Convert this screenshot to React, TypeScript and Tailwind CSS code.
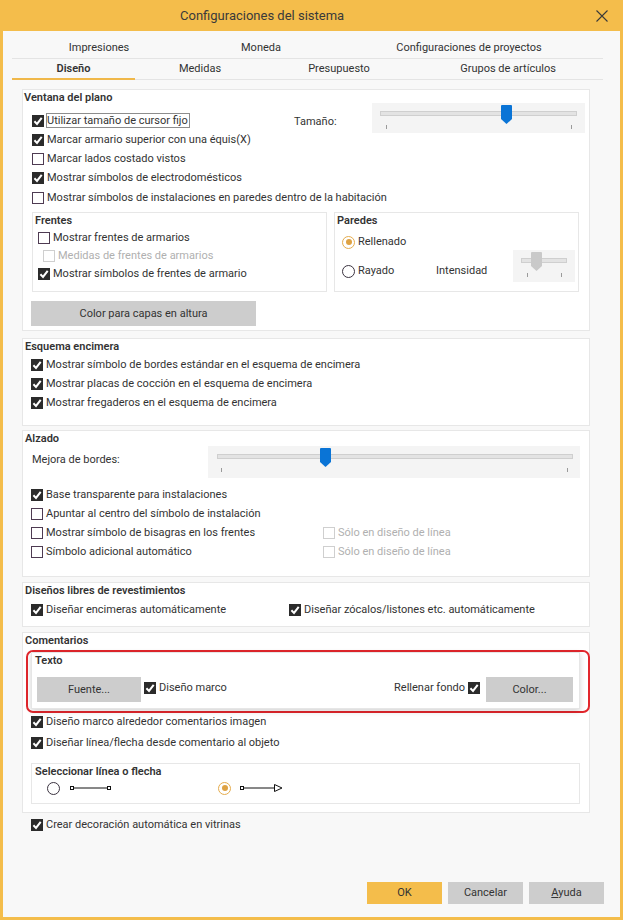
import React from "react";

function Check({ checked = false, disabled = false }: { checked?: boolean; disabled?: boolean }) {
  if (checked) {
    return (
      <span className="w-[12px] h-[12px] bg-[#2b2b2b] flex items-center justify-center shrink-0">
        <svg width="10" height="10" viewBox="0 0 10 10">
          <path d="M1.4 5.3 L4 7.9 L8.7 1.8" fill="none" stroke="#fff" strokeWidth="2" />
        </svg>
      </span>
    );
  }
  return (
    <span
      className={`block w-[12px] h-[12px] bg-white border shrink-0 ${
        disabled ? "border-[#cfcfcf]" : "border-[#4e3b52]"
      }`}
    />
  );
}

function CheckRow({
  label,
  checked = false,
  disabled = false,
  focus = false,
  h = "h-[19px]",
}: {
  label: string;
  checked?: boolean;
  disabled?: boolean;
  focus?: boolean;
  h?: string;
}) {
  return (
    <div className={`flex items-center ${h}`}>
      <Check checked={checked} disabled={disabled} />
      {focus ? (
        <span className="ml-[2px] border border-[#8d8d8d] leading-[13px] pr-px">{label}</span>
      ) : (
        <span className={`ml-[3px] ${disabled ? "text-[#b0b0b0]" : ""}`}>{label}</span>
      )}
    </div>
  );
}

function Radio({ checked = false }: { checked?: boolean }) {
  if (checked) {
    return (
      <span className="w-[13px] h-[13px] rounded-full border-[1.5px] border-[#e5ac4d] bg-white flex items-center justify-center shrink-0">
        <span className="block w-[6px] h-[6px] rounded-full bg-[#dea243]" />
      </span>
    );
  }
  return <span className="block w-[13px] h-[13px] rounded-full border border-[#3b3340] bg-white shrink-0" />;
}

function Slider({
  w,
  h,
  trackL,
  trackR,
  thumb,
  ticks,
  tickTop,
  disabled = false,
}: {
  w: number;
  h: number;
  trackL: number;
  trackR: number;
  thumb: number;
  ticks: number[];
  tickTop: number;
  disabled?: boolean;
}) {
  const t = thumb;
  return (
    <svg width={w} height={h} className="shrink-0 block">
      <rect x="0" y="0" width={w} height={h} fill="#f4f4f4" />
      <rect x={trackL + 0.5} y="8.5" width={w - trackL - trackR - 1} height="4" fill="#e3e3e3" stroke="#cfcfcf" />
      {ticks.map((x) => (
        <line key={x} x1={x + 0.5} x2={x + 0.5} y1={tickTop} y2={tickTop + 4} stroke="#9a9a9a" />
      ))}
      <path
        d={`M${t + 1} 2 H${t + 10} Q${t + 11} 2 ${t + 11} 3 V16 L${t + 5.5} 21 L${t} 16 V3 Q${t} 2 ${t + 1} 2 Z`}
        fill={disabled ? "#c9c9c9" : "#0a74d6"}
      />
    </svg>
  );
}

function Btn({ label, w, h = "h-[25px]", bg = "bg-[#cdcdcd]" }: { label: React.ReactNode; w: string; h?: string; bg?: string }) {
  return <div className={`${w} ${h} ${bg} flex items-center justify-center shrink-0`}>{label}</div>;
}

const section = "bg-white border border-[#e7e7e7] flex flex-col";
const title = "h-[16px] leading-[16px] font-semibold";

export default function App() {
  return (
    <div className="w-[623px] h-[920px] bg-[#f4bd4b] flex flex-col font-['Roboto',sans-serif] text-[11px] leading-[16px] text-[#333]">
      {/* title bar */}
      <div className="h-[31px] flex items-center shrink-0">
        <span className="ml-[180px] text-[13px] text-[#3a3a3a]">Configuraciones del sistema</span>
        <svg width="12" height="12" viewBox="0 0 12 12" className="ml-auto mr-[15px]">
          <path d="M0.5 0.5 L11.5 11.5 M11.5 0.5 L0.5 11.5" stroke="#3a3a3a" strokeWidth="1.1" />
        </svg>
      </div>

      <div className="mx-[3px] mb-[3px] flex-1 bg-[#f8f8f8] flex flex-col">
        {/* tabs */}
        <div className="ml-[9px] mt-[7px] w-[591px]">
          <div className="flex h-[21px] border-b border-[#e4e4e4]">
            <div className="w-[174px] flex items-center justify-center">Impresiones</div>
            <div className="w-[150px] flex items-center justify-center">Moneda</div>
            <div className="w-[266px] flex items-center justify-center">Configuraciones de proyectos</div>
          </div>
          <div className="flex h-[21px] border-b border-[#e4e4e4]">
            <div className="w-[123px] flex items-center justify-center font-semibold border-b-2 border-[#f0b84a] -mb-px">
              Diseño
            </div>
            <div className="w-[130px] flex items-center justify-center">Medidas</div>
            <div className="w-[148px] flex items-center justify-center">Presupuesto</div>
            <div className="w-[190px] flex items-center justify-center">Grupos de artículos</div>
          </div>
        </div>

        <div className="ml-[19px] w-[568px] mt-[9px] flex flex-col">
          {/* Ventana del plano */}
          <div className={`${section} h-[242px]`}>
            <div className="flex">
              <div className="flex flex-col">
                <div className={`${title} pl-[1px]`}>Ventana del plano</div>
                <div className="pl-[9px] mt-[5px]">
                  <CheckRow label="Utilizar tamaño de cursor fijo" checked focus />
                  <CheckRow label="Marcar armario superior con una équis(X)" checked />
                  <CheckRow label="Marcar lados costado vistos" />
                  <CheckRow label="Mostrar símbolos de electrodomésticos" checked />
                </div>
              </div>
              <div className="ml-auto mr-[4px] pt-[13px] flex items-start">
                <span className="w-[78px] mt-[11px]">Tamaño:</span>
                <Slider w={213} h={30} trackL={8} trackR={8} thumb={129} ticks={[14, 199]} tickTop={22} />
              </div>
            </div>
            <div className="pl-[9px] mt-[1px]">
              <CheckRow label="Mostrar símbolos de instalaciones en paredes dentro de la habitación" />
            </div>
            <div className="flex ml-[9px] mt-[5px] gap-[7px]">
              <div className="w-[295px] h-[80px] border border-[#e7e7e7] flex flex-col">
                <div className={`${title} pl-[2px]`}>Frentes</div>
                <div className="pl-[5px]">
                  <CheckRow label="Mostrar frentes de armarios" h="h-[18px]" />
                  <div className="pl-[5px]">
                    <CheckRow label="Medidas de frentes de armarios" disabled h="h-[18px]" />
                  </div>
                  <CheckRow label="Mostrar símbolos de frentes de armario" checked h="h-[18px]" />
                </div>
              </div>
              <div className="w-[245px] h-[80px] border border-[#e7e7e7] flex flex-col">
                <div className={`${title} pl-[2px]`}>Paredes</div>
                <div className="flex items-center h-[20px] mt-[3px] pl-[7px]">
                  <Radio checked />
                  <span className="ml-[3px]">Rellenado</span>
                </div>
                <div className="flex items-start pl-[7px] -mt-[2px]">
                  <div className="w-[94px] flex items-center mt-[13px]">
                    <Radio />
                    <span className="ml-[3px]">Rayado</span>
                  </div>
                  <span className="w-[77px] mt-[13px]">Intensidad</span>
                  <Slider w={62} h={32} trackL={8} trackR={8} thumb={18} ticks={[14, 48]} tickTop={23} disabled />
                </div>
              </div>
            </div>
            <div className="ml-[8px] mt-[9px]">
              <Btn label="Color para capas en altura" w="w-[225px]" />
            </div>
          </div>

          {/* Esquema encimera */}
          <div className={`${section} h-[88px] mt-[7px]`}>
            <div className={`${title} pl-[2px]`}>Esquema encimera</div>
            <div className="pl-[8px]">
              <CheckRow label="Mostrar símbolo de bordes estándar en el esquema de encimera" checked />
              <CheckRow label="Mostrar placas de cocción en el esquema de encimera" checked />
              <CheckRow label="Mostrar fregaderos en el esquema de encimera" checked />
            </div>
          </div>

          {/* Alzado */}
          <div className={`${section} h-[147px] mt-[4px]`}>
            <div className={`${title} pl-[2px]`}>Alzado</div>
            <div className="flex items-start">
              <span className="pl-[9px] mt-[5px]">Mejora de bordes:</span>
              <div className="ml-auto mr-[9px] -mt-[1px]">
                <Slider w={372} h={32} trackL={9} trackR={7} thumb={112} ticks={[13, 359]} tickTop={22} />
              </div>
            </div>
            <div className="mt-[7px]">
              <div className="flex">
                <div className="w-[300px] pl-[8px]">
                  <CheckRow label="Base transparente para instalaciones" checked />
                </div>
              </div>
              <div className="flex">
                <div className="w-[300px] pl-[8px]">
                  <CheckRow label="Apuntar al centro del símbolo de instalación" />
                </div>
              </div>
              <div className="flex">
                <div className="w-[300px] pl-[8px]">
                  <CheckRow label="Mostrar símbolo de bisagras en los frentes" />
                </div>
                <CheckRow label="Sólo en diseño de línea" disabled />
              </div>
              <div className="flex">
                <div className="w-[300px] pl-[8px]">
                  <CheckRow label="Símbolo adicional automático" />
                </div>
                <CheckRow label="Sólo en diseño de línea" disabled />
              </div>
            </div>
          </div>

          {/* Diseños libres */}
          <div className={`${section} h-[45px] mt-[5px]`}>
            <div className={`${title} pl-[2px]`}>Diseños libres de revestimientos</div>
            <div className="flex mt-[1px]">
              <div className="w-[266px] pl-[8px]">
                <CheckRow label="Diseñar encimeras automáticamente" checked />
              </div>
              <CheckRow label="Diseñar zócalos/listones etc. automáticamente" checked />
            </div>
          </div>

          {/* Comentarios */}
          <div className={`${section} h-[181px] mt-[5px]`}>
            <div className={`${title} pl-[2px] font-normal`}>Comentarios</div>
            <div className="ml-[3px] mt-[1px] w-[564px] h-[63px] border-2 border-[#e2262c] rounded-[7px]">
              <div className="ml-[3px] w-[549px] h-[57px] bg-white border border-[#e6e6e6] shadow-[0_2px_6px_rgba(0,0,0,0.18)] flex flex-col">
                <div className={`${title} pl-[3px]`}>Texto</div>
                <div className="flex items-center mt-[8px]">
                  <div className="ml-[5px]">
                    <Btn label="Fuente..." w="w-[104px]" />
                  </div>
                  <div className="ml-[3px] flex items-center -mt-[4px]">
                    <Check checked />
                    <span className="ml-[3px]">Diseño marco</span>
                  </div>
                  <div className="ml-auto flex items-center -mt-[4px]">
                    <span>Rellenar fondo</span>
                    <span className="ml-[3px] flex">
                      <Check checked />
                    </span>
                  </div>
                  <div className="ml-[6px] mr-[6px]">
                    <Btn label="Color..." w="w-[87px]" />
                  </div>
                </div>
              </div>
            </div>
            <div className="pl-[8px]">
              <CheckRow label="Diseño marco alrededor comentarios imagen" checked h="h-[18px]" />
              <div className="mt-[3px]">
                <CheckRow label="Diseñar línea/flecha desde comentario al objeto" checked h="h-[18px]" />
              </div>
            </div>
            <div className="ml-[8px] mt-[11px] w-[549px] h-[41px] border border-[#e7e7e7] flex flex-col">
              <div className={`${title} pl-[3px]`}>Seleccionar línea o flecha</div>
              <div className="flex items-center h-[16px]">
                <span className="ml-[15px] flex">
                  <Radio />
                </span>
                <svg width="41" height="6" className="ml-[10px]">
                  <rect x="0.5" y="1.5" width="3" height="3" fill="#fff" stroke="#111" />
                  <line x1="3.5" x2="37.5" y1="3" y2="3" stroke="#111" />
                  <rect x="37.5" y="1.5" width="3" height="3" fill="#fff" stroke="#111" />
                </svg>
                <span className="ml-[107px] flex">
                  <Radio checked />
                </span>
                <svg width="44" height="10" className="ml-[9px]">
                  <rect x="0.5" y="3.5" width="3" height="3" fill="#fff" stroke="#111" />
                  <line x1="3.5" x2="34" y1="5" y2="5" stroke="#111" />
                  <path d="M34.5 1.5 L42 5 L34.5 8.5 Z" fill="#fff" stroke="#111" />
                </svg>
              </div>
            </div>
          </div>

          <div className="pl-[9px] mt-[3px]">
            <CheckRow label="Crear decoración automática en vitrinas" checked h="h-[18px]" />
          </div>
        </div>

        {/* buttons */}
        <div className="mt-auto flex justify-end gap-[6px] pr-[16px] pb-[13px]">
          <Btn label="OK" w="w-[75px]" h="h-[22px]" bg="bg-[#f4bd4b]" />
          <Btn label="Cancelar" w="w-[75px]" h="h-[22px]" />
          <Btn
            label={
              <span>
                <span className="underline">A</span>yuda
              </span>
            }
            w="w-[75px]"
            h="h-[22px]"
          />
        </div>
      </div>
    </div>
  );
}
